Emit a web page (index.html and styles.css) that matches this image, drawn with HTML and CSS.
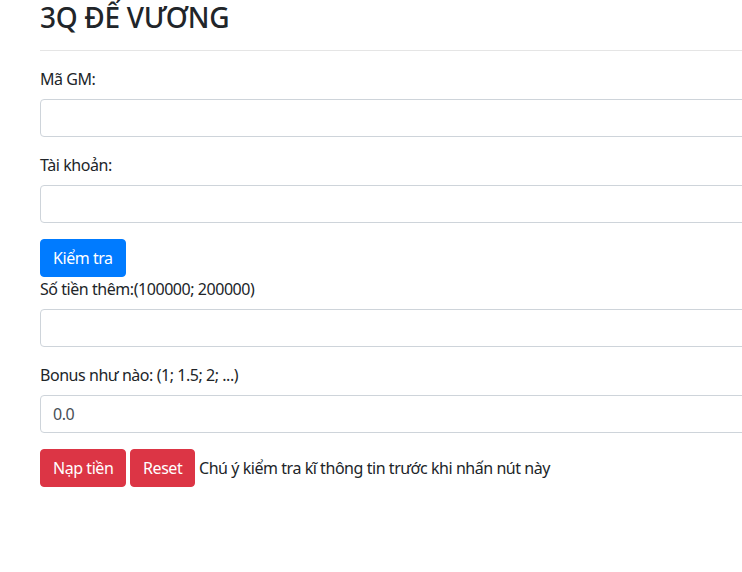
FILE: index.html
```html
<!DOCTYPE html>
<html lang="vi">
<head>
<meta charset="utf-8">
<title>3Q ĐẾ VƯƠNG</title>
<link rel="stylesheet" href="styles.css">
</head>
<body>
<div class="container">
  <h3 class="title">3Q ĐẾ VƯƠNG</h3>
  <hr class="rule">
  <form class="form">
    <div class="form-group">
      <label class="label" for="gm">Mã GM:</label>
      <input class="input" id="gm" type="text">
    </div>
    <div class="form-group">
      <label class="label" for="acc">Tài khoản:</label>
      <input class="input" id="acc" type="text">
    </div>
    <button type="button" class="btn btn-primary">Kiểm tra</button>
    <div class="form-group">
      <label class="label" for="money">Số tiền thêm:(100000; 200000)</label>
      <input class="input" id="money" type="text">
    </div>
    <div class="form-group">
      <label class="label" for="bonus">Bonus như nào: (1; 1.5; 2; ...)</label>
      <input class="input" id="bonus" type="text" value="0.0">
    </div>
    <div class="actions">
      <button type="button" class="btn btn-danger">Nạp tiền</button>
      <button type="button" class="btn btn-danger">Reset</button>
      <span class="note">Chú ý kiểm tra kĩ thông tin trước khi nhấn nút này</span>
    </div>
  </form>
</div>
</body>
</html>
```

FILE: styles.css
```css
html {
  overflow: hidden;
}
body {
  margin: 0;
  font-family: "Noto Sans", "Open Sans", sans-serif;
  font-size: 16px;
  line-height: 1.5;
  color: #212529;
  background: #fff;
}
.container {
  width: 1100px;
  padding: 0 40px;
}
.title {
  margin: 0;
  padding-top: 1px;
  font-size: 28px;
  font-weight: 500;
  line-height: 1.2;
  letter-spacing: -0.3px;
}
.rule {
  margin: 15px 0 16px;
  border: 0;
  border-top: 1px solid rgba(0, 0, 0, 0.1);
}
.form {
  letter-spacing: -0.45px;
}
.form-group {
  margin-bottom: 16px;
}
.label {
  display: inline-block;
  margin-bottom: 8px;
}
.input {
  display: block;
  box-sizing: border-box;
  width: 100%;
  height: 38px;
  padding: 6px 12px;
  font: inherit;
  font-size: 16px;
  line-height: 1.5;
  letter-spacing: -0.45px;
  color: #495057;
  background: #fff;
  border: 1px solid #ced4da;
  border-radius: 4px;
}
.btn {
  display: inline-block;
  box-sizing: border-box;
  height: 38px;
  padding: 6px 12px;
  font: inherit;
  font-size: 16px;
  line-height: 1.5;
  letter-spacing: -0.45px;
  color: #fff;
  border: 1px solid transparent;
  border-radius: 4px;
  vertical-align: middle;
}
.btn-primary {
  background: #007bff;
  border-color: #007bff;
}
.btn-danger {
  background: #dc3545;
  border-color: #dc3545;
}
.note {
  vertical-align: middle;
}
```
